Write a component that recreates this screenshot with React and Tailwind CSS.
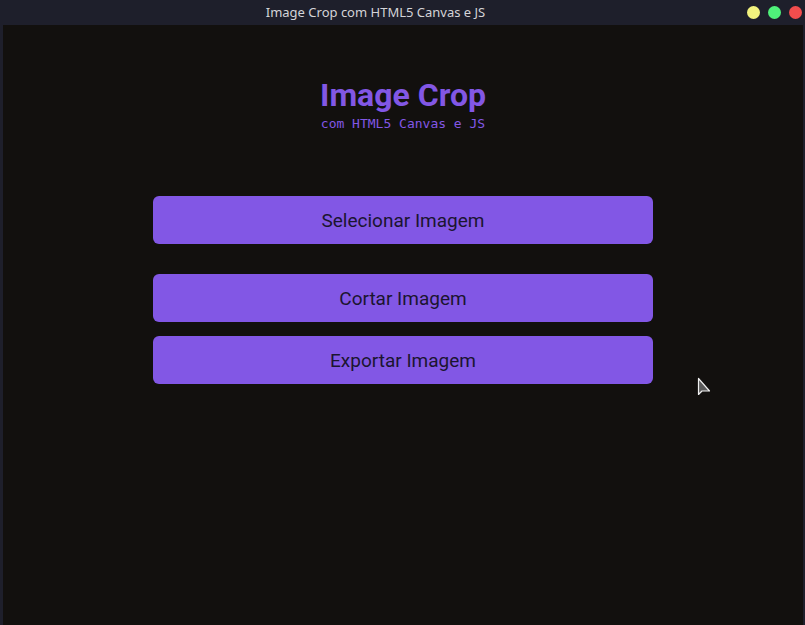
const ACTIONS = ['Cortar Imagem', 'Exportar Imagem']

function Dot({ color }) {
  return <span className={`w-[13px] h-[13px] rounded-full ${color}`} />
}

function Cursor() {
  return (
    <svg className="absolute left-[697px] top-[377px]" width="14" height="22" viewBox="0 0 14 22">
      <path d="M1.5 1.5 L1.5 17.5 L5 14 L12.5 14 Z" fill="#5a5a5a" stroke="#f0f0f0" strokeWidth="1.2" strokeLinejoin="round" />
    </svg>
  )
}

function ActionButton({ label, className = '' }) {
  return (
    <button
      className={`w-[500px] h-[48px] pt-[3px] rounded-md bg-[#8257e5] text-[#1b1530] text-[19px] ${className}`}
      style={{ fontFamily: 'Roboto, sans-serif' }}
    >
      {label}
    </button>
  )
}

export default function App() {
  return (
    <div className="w-[805px] h-[625px] flex flex-col bg-[#1e1f2b] overflow-hidden relative">
      {/* Title bar */}
      <div className="h-[25px] shrink-0 flex items-center relative">
        <p
          className="flex-1 text-center text-[13px] text-[#d4d4d8] pl-[4px]"
          style={{ fontFamily: '"Noto Sans", sans-serif' }}
        >
          Image Crop com HTML5 Canvas e JS
        </p>
        <div className="flex items-center gap-[8px] pr-[3px]">
          <Dot color="bg-[#f2f27e]" />
          <Dot color="bg-[#4ff17a]" />
          <Dot color="bg-[#f24d4d]" />
        </div>
      </div>

      {/* Content */}
      <div className="flex-1 ml-[3px] mr-[2px] bg-[#12100e] flex flex-col items-center">
        <h1
          className="mt-[50px] text-[32px] font-bold leading-[41px] text-[#8257e5]"
          style={{ fontFamily: 'Roboto, sans-serif' }}
        >
          Image Crop
        </h1>
        <p
          className="text-[13px] leading-[16px] text-[#8257e5]"
          style={{ fontFamily: '"DejaVu Sans Mono", monospace' }}
        >
          com HTML5 Canvas e JS
        </p>

        <ActionButton label="Selecionar Imagem" className="mt-[64px]" />
        <div className="mt-[30px] flex flex-col gap-[14px]">
          {ACTIONS.map((a) => (
            <ActionButton key={a} label={a} />
          ))}
        </div>
      </div>

      <Cursor />
    </div>
  )
}
